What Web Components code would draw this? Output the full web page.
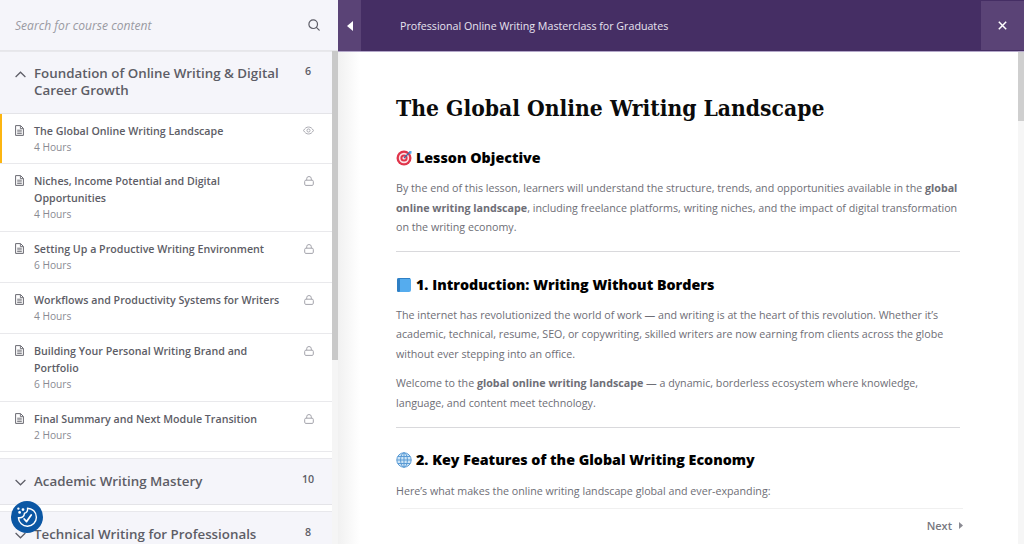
<!DOCTYPE html>
<html lang="en"><head><meta charset="utf-8"><title>Lesson</title>
<style>
html,body{margin:0;padding:0;height:544px;overflow:hidden;background:#fff;font-family:"Open Sans",sans-serif}
</style></head><body>
<template id="t-app"><style>
:host{display:grid;grid-template-columns:338px 1fr;grid-template-rows:52px 492px;width:1024px;height:544px;overflow:hidden;position:relative;background:#f5f5fa}
</style><slot></slot></template>

<template id="t-search"><style>
:host{display:flex;align-items:center;justify-content:space-between;background:#f5f5fa;padding:0 18px 0 15px;border-bottom:1px solid #e6e6ea;box-sizing:border-box;height:51px;align-self:start}
span{font:italic 400 12.1px/18px "Open Sans",sans-serif;color:#9a9aa2;padding-top:1px}
svg{display:block}
</style><span>Search for course content</span>
<svg width="12" height="12" viewBox="0 0 12 12" fill="none" stroke="#5c5c66" stroke-width="1.2" stroke-linecap="round"><circle cx="5.2" cy="5.2" r="4.3"/><path d="M8.4 8.4 11.2 11.2"/></svg></template>

<template id="t-topbar"><style>
:host{display:flex;align-items:stretch;background:#452e64;border-bottom:1px solid #b3a7c9;box-sizing:border-box;height:52px;color:#fff}
.b{background:#5a4376;display:flex;align-items:center;justify-content:center}
.l{width:23px}.r{width:43px;margin-top:1px;margin-bottom:1px}
.t{flex:1;padding-left:39px;font:400 10.67px/52px "Open Sans",sans-serif;color:#e8e4f0}
svg{display:block}
</style><div class="b l"><svg width="6" height="10" viewBox="0 0 6 10"><path d="M6 0V10L0 5Z" fill="#fff"/></svg></div>
<div class="t"><slot></slot></div>
<div class="b r"><svg width="9" height="9" viewBox="0 0 9 9" fill="none" stroke="#fff" stroke-width="1.5"><path d="M.8.8 8.2 8.2M8.2.8.8 8.2"/></svg></div></template>

<template id="t-side"><style>
:host{display:flex;height:493px;margin-top:-1px;overflow:hidden;background:#fff}
.list{width:332px;flex:none;display:block;overflow:hidden}
.track{width:6px;flex:none;background:#f5f5f5;display:flex;flex-direction:column}
.thumb{height:309px;background:#c9c9c9;flex:none}
</style><div class="list"><slot></slot></div><div class="track"><div class="thumb"></div></div></template>

<template id="t-section"><style>
:host{display:block;margin-bottom:6px}
.h{display:flex;align-items:flex-start;background:#f5f5fa;border-top:1px solid #e8e8ec;border-bottom:1px solid #e4e4e8;box-sizing:border-box;padding:14px 14px 0 15px}
:host([open]) .h{padding-top:13px}
.c{width:11px;height:18px;margin-right:8px;flex:none;display:flex;align-items:center}
.t{flex:1;font:600 13.33px/17px "Open Sans",sans-serif;color:#5d5d66;padding-right:18px}
.n{font:600 10.67px/18px "Open Sans",sans-serif;color:#5d5d66;margin-top:-3px;width:20px;text-align:center;white-space:nowrap}
svg{display:block}
</style><div class="h" part="h"><div class="c"><svg width="11" height="7" viewBox="0 0 11 7" fill="none" stroke="#5d5d66" stroke-width="1.2"><path class="p" d=""/></svg></div><div class="t"></div><div class="n"></div></div><slot></slot></template>

<template id="t-lesson"><style>
:host{display:flex;align-items:flex-start;background:#fff;border-bottom:1px solid #e9e9ec;box-sizing:border-box;padding:9px 18px 0 15px;position:relative}
.bar{position:absolute;left:0;top:0;bottom:0;width:2px;background:#fcb511;display:none}
:host([active]) .bar{display:block}
.i{width:19px;flex:none;padding-top:2px}
.m{flex:1;min-width:0;padding-right:20px}
.t{font:600 10.67px/17px "Open Sans",sans-serif;color:#5d5d66}
.d{font:400 10.2px/15px "Open Sans",sans-serif;color:#8a8a92}
.s{flex:none;padding-top:3px;width:11px;display:flex;justify-content:center}
svg{display:block}
</style><div class="bar"></div>
<div class="i"><svg width="9" height="11" viewBox="0 0 9 11" fill="none" stroke="#6a6a72" stroke-width="1"><path d="M.6.6H5.6L8.4 3.4V10.4H.6Z"/><path d="M2.2 5.2H6.8M2.2 6.9H6.8M2.2 8.6H6.8M5.4.8V3.6H8.2" stroke-width=".9"/></svg></div>
<div class="m"><div class="t"></div><div class="d"></div></div>
<div class="s"></div></template>

<template id="t-main"><style>
:host{display:flex;height:492px;overflow:hidden;background:linear-gradient(90deg,#f1f1f1 0,#fff 22px,#fff 100%)}
.col{flex:1;min-width:0;display:flex;flex-direction:column}
.body{flex:1;min-height:0;overflow:hidden;padding:0 58px 0 58px}
.foot{margin:0 55px 0 62px;height:36px;flex:none;border-top:1px solid #f0f0f0;box-sizing:border-box;display:flex;justify-content:flex-end;align-items:center;gap:7px;font:600 11px/16px "Open Sans",sans-serif;color:#77777f;padding-bottom:2px}
.track{width:6px;flex:none;background:#f6f6f6;display:flex;flex-direction:column}
.thumb{height:69px;background:#cfcfcf;flex:none}
svg{display:block}
</style><div class="col"><div class="body"><slot></slot></div>
<div class="foot"><span>Next</span><svg width="4" height="7" viewBox="0 0 4 7"><path d="M0 0V7L4 3.5Z" fill="#8a8a92"/></svg></div></div>
<div class="track"><div class="thumb"></div></div></template>

<template id="t-h"><style>
:host{display:flex;align-items:center;gap:4px;font:800 14.27px/20px "Open Sans",sans-serif;color:#000}
svg{display:block;flex:none}
</style><slot name="i"></slot><slot></slot></template>

<template id="t-p"><style>
:host{display:block;font:400 10.7px/19.5px "Open Sans",sans-serif;color:#6e6e76}
</style><slot></slot></template>

<template id="t-title"><style>
:host{display:block;font:700 22.65px/36px "DejaVu Serif Condensed","DejaVu Serif","Liberation Serif",serif;color:#0b0b0b;white-space:nowrap}
</style><slot></slot></template>

<template id="t-badge"><style>
:host{position:absolute;left:11px;top:501px;width:32px;height:32px;border-radius:50%;background:#0b57a4;display:flex;align-items:center;justify-content:center}
svg{display:block}
</style><svg width="24" height="24" viewBox="0 0 24 24" fill="none" stroke="#fff" stroke-width="1.4" stroke-linecap="round" stroke-linejoin="round"><path d="M12.5 3.2A9 9 0 1 1 3.4 12.6C6.8 13.4 9.6 11.2 9.4 8.2 11.6 8 13 5.8 12.5 3.2Z"/><path d="M9.2 14 11.6 16.6 16.2 10" stroke-width="1.8"/><circle cx="8" cy="4.6" r=".7" fill="#fff"/><circle cx="4.6" cy="7.4" r=".7" fill="#fff"/><circle cx="3.4" cy="3.6" r=".5" fill="#fff"/></svg></template>

<c-app>
  <c-search></c-search>
  <c-topbar>Professional Online Writing Masterclass for Graduates</c-topbar>
  <c-side>
    <c-section title-text="Foundation of Online Writing &amp; Digital Career Growth" count="6" open style="--h:63px">
      <c-lesson active name="The Global Online Writing Landscape" dur="4 Hours" state="eye" style="height:50px"></c-lesson>
      <c-lesson name="Niches, Income Potential and Digital Opportunities" dur="4 Hours" style="height:68px"></c-lesson>
      <c-lesson name="Setting Up a Productive Writing Environment" dur="6 Hours" style="height:51px"></c-lesson>
      <c-lesson name="Workflows and Productivity Systems for Writers" dur="4 Hours" style="height:51px"></c-lesson>
      <c-lesson name="Building Your Personal Writing Brand and Portfolio" dur="6 Hours" style="height:68px"></c-lesson>
      <c-lesson name="Final Summary and Next Module Transition" dur="2 Hours" style="height:50px"></c-lesson>
    </c-section>
    <c-section title-text="Academic Writing Mastery" count="10" style="--h:47px"></c-section>
    <c-section title-text="Technical Writing for Professionals" count="8" style="--h:47px"></c-section>
  </c-side>
  <c-main>
    <c-title style="margin-top:38px">The Global Online Writing Landscape</c-title>
    <c-h style="margin-top:22px"><svg slot="i" width="16" height="16" viewBox="0 0 16 16"><circle cx="8" cy="8" r="7.5" fill="#e0354b"/><circle cx="8" cy="8" r="5.2" fill="#fbe3e6"/><circle cx="8" cy="8" r="3.6" fill="#e0354b"/><circle cx="8" cy="8" r="1.6" fill="#fbe3e6"/><path d="M8 8 14 2" stroke="#3a6ea5" stroke-width="1.2"/><path d="M13 1h2.5v2.5L14 4Z" fill="#55acee"/></svg><span>Lesson Objective</span></c-h>
    <c-p style="margin-top:11px">By the end of this lesson, learners will understand the structure, trends, and opportunities available in the <b>global online writing landscape</b>, including freelance platforms, writing niches, and the impact of digital transformation on the writing economy.</c-p>
    <c-rule style="margin:13px 0 23px"></c-rule>
    <c-h><svg slot="i" width="16" height="16" viewBox="0 0 16 16"><rect x="1" y="1" width="14" height="14" rx="2" fill="#55acee"/><rect x="1" y="1" width="3" height="14" rx="1.5" fill="#2f7fc4"/><path d="M3 1.5H14" stroke="#2f7fc4"/></svg><span>1. Introduction: Writing Without Borders</span></c-h>
    <c-p style="margin-top:11px">The internet has revolutionized the world of work — and writing is at the heart of this revolution. Whether it’s academic, technical, resume, SEO, or copywriting, skilled writers are now earning from clients across the globe without ever stepping into an office.</c-p>
    <c-p style="margin-top:10px">Welcome to the <b>global online writing landscape</b> — a dynamic, borderless ecosystem where knowledge, language, and content meet technology.</c-p>
    <c-rule style="margin:13.5px 0 22px"></c-rule>
    <c-h><svg slot="i" width="16" height="16" viewBox="0 0 16 16" fill="#cfe6f7" stroke="#5b9bd5" stroke-width="1"><circle cx="8" cy="8" r="7.2"/><ellipse cx="8" cy="8" rx="3.4" ry="7.2" fill="none"/><path d="M.8 8H15.2M1.8 4.5H14.2M1.8 11.5H14.2M8 .8V15.2" fill="none"/></svg><span>2. Key Features of the Global Writing Economy</span></c-h>
    <c-p style="margin-top:12px">Here’s what makes the online writing landscape global and ever-expanding:</c-p>
  </c-main>
  <c-badge></c-badge>
</c-app>
<script>
function mk(id){return class extends HTMLElement{constructor(){super();this.attachShadow({mode:'open'}).append(document.getElementById(id).content.cloneNode(true));}}}
customElements.define('c-app',mk('t-app'));
customElements.define('c-search',mk('t-search'));
customElements.define('c-topbar',mk('t-topbar'));
customElements.define('c-side',mk('t-side'));
customElements.define('c-main',mk('t-main'));
customElements.define('c-h',mk('t-h'));
customElements.define('c-p',mk('t-p'));
customElements.define('c-title',mk('t-title'));
customElements.define('c-badge',mk('t-badge'));
customElements.define('c-rule',class extends HTMLElement{constructor(){super();this.attachShadow({mode:'open'}).innerHTML='<style>:host{display:block;height:1px;background:#d9d9dc}</style>';}});
customElements.define('c-section',class extends mk('t-section'){connectedCallback(){const s=this.shadowRoot;
 s.querySelector('.t').textContent=this.getAttribute('title-text');
 s.querySelector('.n').textContent=this.getAttribute('count');
 s.querySelector('.h').style.height=getComputedStyle(this).getPropertyValue('--h');
 s.querySelector('.p').setAttribute('d',this.hasAttribute('open')?'M.6 6 5.5 1.2 10.4 6':'M.6 1 5.5 5.8 10.4 1');}});
const EYE='<svg width="12" height="9" viewBox="0 0 12 9" fill="none" stroke="#a4a4ac" stroke-width="1"><path d="M.6 4.5C2 2 3.8.7 6 .7S10 2 11.4 4.5C10 7 8.2 8.3 6 8.3S2 7 .6 4.5Z"/><circle cx="6" cy="4.5" r="1.7"/></svg>';
const LOCK='<svg width="10" height="10" viewBox="0 0 10 10" fill="none" stroke="#a4a4ac" stroke-width="1"><rect x=".7" y="4.2" width="8.6" height="5.2" rx="1.2"/><path d="M2.7 4.2V2.8A2.3 2.3 0 0 1 7.3 2.8V4.2"/></svg>';
customElements.define('c-lesson',class extends mk('t-lesson'){connectedCallback(){const s=this.shadowRoot;
 s.querySelector('.t').textContent=this.getAttribute('name');
 s.querySelector('.d').textContent=this.getAttribute('dur');
 s.querySelector('.s').innerHTML=this.getAttribute('state')==='eye'?EYE:LOCK;}});
</script>
</body></html>
